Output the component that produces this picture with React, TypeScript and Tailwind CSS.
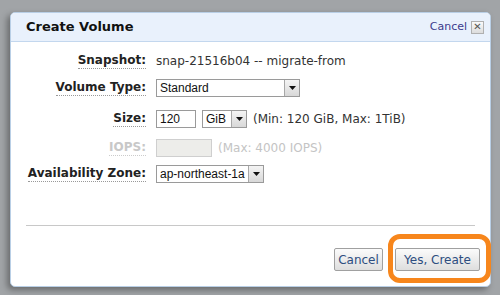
import React from "react";

const font = { fontFamily: '"DejaVu Sans", Verdana, sans-serif' };
const arial = { fontFamily: '"Liberation Sans", Arial, sans-serif' };

function Arrow() {
  return (
    <span className="flex h-full w-[15px] shrink-0 items-center justify-center border-l border-[#a8a8a8] bg-gradient-to-b from-[#f4f4f4] to-[#d8d8d8]">
      <svg width="7" height="4" viewBox="0 0 7 4">
        <path d="M0 0h7L3.5 4z" fill="#111" />
      </svg>
    </span>
  );
}

function Select({ value, width }: { value: string; width: string }) {
  return (
    <div className={`flex h-[18px] items-center border border-[#9a9a9a] bg-white ${width}`} style={arial}>
      <span className="flex-1 whitespace-nowrap pl-[3px] text-[12px] text-[#111]">{value}</span>
      <Arrow />
    </div>
  );
}

function Label({ children, muted }: { children: React.ReactNode; muted?: boolean }) {
  return (
    <div className="flex w-[135px] justify-end">
      <span
        className={`border-b border-dotted pb-[1px] text-[12px] font-bold leading-[14px] ${
          muted ? "border-[#ccc] text-[#c8c8c8]" : "border-[#999] text-[#222]"
        }`}
      >
        {children}
      </span>
    </div>
  );
}

export default function App() {
  return (
    <div className="relative h-[295px] w-[500px] overflow-hidden bg-[#a1a4a7] pt-[12px] pl-[10px]" style={font}>
      <div className="flex h-[275px] w-[481px] flex-col overflow-hidden rounded-[5px] border border-[#b9cfe6] bg-white shadow-[-3px_3px_6px_rgba(0,0,0,0.35)]">
        {/* header */}
        <div className="flex h-[29px] items-center border-b border-[#c3d7ee] bg-[#e9f1fc] pl-[15px] pr-[6px]">
          <span className="flex-1 text-[13px] font-bold text-[#111]">Create Volume</span>
          <span className="mr-[4px] text-[11px] text-[#3b3b8c]">Cancel</span>
          <span className="flex h-[13px] w-[13px] items-center justify-center border border-[#b0b0b0] bg-gradient-to-b from-[#fafafa] to-[#dcdcdc] text-[10px] leading-none text-[#555]">
            ✕
          </span>
        </div>

        {/* form */}
        <div className="flex flex-col pt-[10px]">
          <div className="flex h-[18px] items-center gap-[10px]">
            <Label>Snapshot:</Label>
            <span className="text-[12px] text-[#333]">snap-21516b04 -- migrate-from</span>
          </div>
          <div className="mt-[9px] flex h-[18px] items-center gap-[10px]">
            <Label>Volume Type:</Label>
            <Select value="Standard" width="w-[144px]" />
          </div>
          <div className="mt-[13px] flex h-[18px] items-center gap-[10px]">
            <Label>Size:</Label>
            <div className="flex items-center">
              <div className="flex h-[18px] w-[40px] items-center border border-[#9a9a9a] pl-[3px] text-[12px] text-[#111]" style={arial}>
                120
              </div>
              <div className="ml-[6px]">
                <Select value="GiB" width="w-[45px]" />
              </div>
              <span className="ml-[6px] text-[12px] text-[#333]">(Min: 120 GiB, Max: 1TiB)</span>
            </div>
          </div>
          <div className="mt-[11px] flex h-[18px] items-center gap-[10px]">
            <Label muted>IOPS:</Label>
            <div className="flex items-center">
              <div className="h-[18px] w-[56px] border border-[#cfcfcf] bg-[#ededea]" />
              <span className="ml-[6px] text-[12px] text-[#c4c4c4]">(Max: 4000 IOPS)</span>
            </div>
          </div>
          <div className="mt-[8px] flex h-[18px] items-center gap-[10px]">
            <Label>Availability Zone:</Label>
            <Select value="ap-northeast-1a" width="w-[108px]" />
          </div>
        </div>

        {/* divider */}
        <div className="mx-[15px] mt-[42px] border-t border-[#c8c8c8]" />

        {/* footer */}
        <div className="mt-[22px] flex justify-end gap-[12px] pr-[10px]">
          <button className="h-[23px] w-[49px] rounded-[2px] border border-[#a0a0a0] bg-gradient-to-b from-[#fbfbfb] to-[#dedede] text-[12px] text-[#2d4d80]">
            Cancel
          </button>
          <button className="h-[23px] w-[85px] rounded-[2px] border border-[#a0a0a0] bg-gradient-to-b from-[#fbfbfb] to-[#dedede] text-[12px] text-[#2d4d80]">
            Yes, Create
          </button>
        </div>
      </div>

      {/* highlight annotation */}
      <div className="absolute left-[388px] top-[234px] h-[49px] w-[103px] rounded-[12px] border-[5px] border-[#f7861c]" />
    </div>
  );
}
